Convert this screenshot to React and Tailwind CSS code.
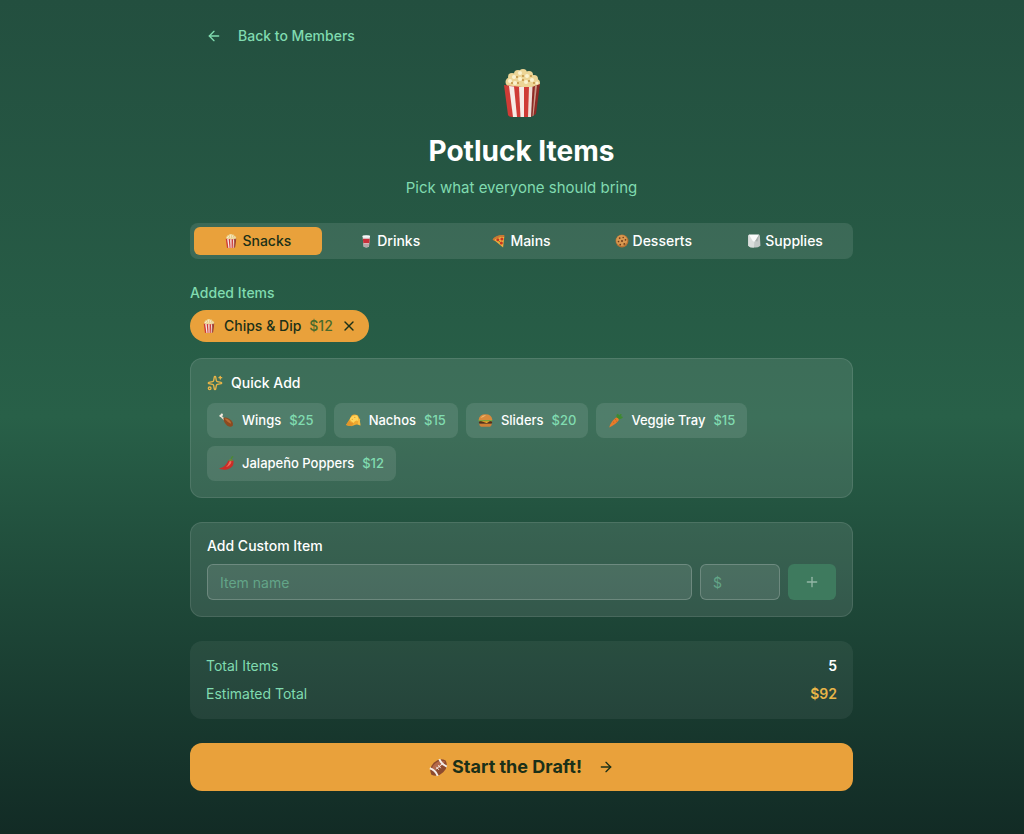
import React, { useState } from 'react'
import { ArrowLeft, ArrowRight, Plus, Sparkles, X } from 'lucide-react'

const Popcorn = ({ className }) => (
  <svg viewBox="0 0 48 48" className={className} aria-hidden="true">
    <g fill="#ecd596">
      <circle cx="12" cy="13" r="4.500" />
      <circle cx="14" cy="8" r="4" />
      <circle cx="20" cy="5" r="4" />
      <circle cx="25" cy="4" r="4" />
      <circle cx="31" cy="6" r="4" />
      <circle cx="36" cy="10" r="4" />
      <circle cx="38" cy="14" r="4" />
      <path d="M9 12 L24 4 L40 12 L38 20 H10 Z" />
    </g>
    <g fill="#fbf2cf">
      <circle cx="12" cy="12" r="2" />
      <circle cx="16" cy="8" r="2" />
      <circle cx="22" cy="4" r="2" />
      <circle cx="22" cy="10" r="2" />
      <circle cx="29" cy="7" r="2" />
      <circle cx="28" cy="13" r="2" />
      <circle cx="34" cy="11" r="2" />
      <circle cx="17" cy="14" r="2" />
      <circle cx="39" cy="14" r="1.500" />
    </g>
    <g fill="#bd8a3a">
      <circle cx="19" cy="8" r="0.900" />
      <circle cx="14" cy="14" r="0.900" />
      <circle cx="20" cy="14" r="0.900" />
      <circle cx="25" cy="7" r="0.900" />
      <circle cx="31" cy="12" r="0.900" />
      <circle cx="33" cy="7" r="0.900" />
      <circle cx="25" cy="11" r="0.900" />
      <circle cx="36" cy="14" r="0.900" />
    </g>
    <path d="M6 16 L24 18 L34 18 L33 48 H14 Q11 48 10 46 Z" fill="#cf3b36" />
    <path d="M34 18 L42 15 L38 45 L33 48 Z" fill="#8f2a25" />
    <path d="M11 17 L16 17.5 L19 48 H15 Z" fill="#f6ebe6" />
    <path d="M21 18 L26 18 L26 48 H22.5 Z" fill="#f6ebe6" />
    <path d="M31 18 L34.5 18 L33 48 H30 Z" fill="#f1ddd6" />
    <path d="M37 17 L39 16.2 L35.5 46.7 L34.5 47.3 Z" fill="#c99c8a" />
  </svg>
)

const Cup = ({ className }) => (
  <svg viewBox="0 0 24 24" className={className} aria-hidden="true">
    <path d="M6 3 H19 L17 22 Q12.500 24 8 22 Z" fill="#dfe3e4" />
    <path d="M6.500 8 H18.500 L17.600 16 H7.400 Z" fill="#c9303a" />
    <path d="M7.500 17 H17.500 L17 22 Q12.500 23.500 8 22 Z" fill="#b9a5a6" />
    <ellipse cx="12.500" cy="4" rx="6.500" ry="2" fill="#f7f8f8" />
  </svg>
)

const Pizza = ({ className }) => (
  <svg viewBox="0 0 24 24" className={className} aria-hidden="true">
    <path d="M1 9 Q9 1 21 2 L21 6 L4 12 Z" fill="#b96c2b" />
    <path d="M3 10 Q11 4 21 5 L19 23 Z" fill="#efae3d" />
    <path d="M1 9 Q9 1 21 2 L21 5 Q11 4 3 11 Z" fill="#c97a35" />
    <circle cx="10" cy="10" r="2.600" fill="#c53522" />
    <circle cx="17" cy="8.500" r="2.600" fill="#c53522" />
    <circle cx="16" cy="15.500" r="2.600" fill="#c53522" />
    <circle cx="12.500" cy="13" r="1" fill="#4f7d33" />
  </svg>
)

const Cookie = ({ className }) => (
  <svg viewBox="0 0 24 24" className={className} aria-hidden="true">
    <circle cx="12" cy="12" r="11" fill="#b87333" />
    <circle cx="11.500" cy="11" r="9.500" fill="#d7974f" />
    <g fill="#6b3a1a">
      <circle cx="8" cy="7" r="1.500" />
      <circle cx="14" cy="6" r="1.300" />
      <circle cx="18" cy="10" r="1.500" />
      <circle cx="12" cy="12" r="1.700" />
      <circle cx="6" cy="13" r="1.400" />
      <circle cx="9" cy="18" r="1.500" />
      <circle cx="16" cy="17" r="1.600" />
    </g>
  </svg>
)

const Tissue = ({ className }) => (
  <svg viewBox="0 0 24 24" className={className} aria-hidden="true">
    <path d="M2 2 H22 L23 20 Q18 24 12 23 Q6 24 2 20 Z" fill="#c3c8c7" />
    <path d="M2 2 H13 L12 23 Q6 24 2 20 Z" fill="#dadddc" />
    <path d="M3 1 H21 L14 12 Q12 14 10 12 Z" fill="#fafbfb" />
    <path d="M21 1 L14 12 L18 13 Z" fill="#a9b0ae" />
  </svg>
)

const Drumstick = ({ className }) => (
  <svg viewBox="0 0 24 24" className={className} aria-hidden="true">
    <path d="M3 5 L9 11" stroke="#e7dccb" strokeWidth="2.500" strokeLinecap="round" />
    <circle cx="2.500" cy="4.500" r="1.900" fill="#f3ebde" />
    <circle cx="4.500" cy="2.700" r="1.900" fill="#f3ebde" />
    <path d="M7 8 Q10 6 16 9 Q24 14 22 20 Q19 24 13 20 Q7 15 7 8 Z" fill="#8c4a20" />
    <path d="M9 9 Q13 8 17 12 Q20 15 19 17 Q14 15 9 9 Z" fill="#b96d34" />
  </svg>
)

const Nachos = ({ className }) => (
  <svg viewBox="0 0 24 24" className={className} aria-hidden="true">
    <path d="M0 19 L5 11 L9 4 Q13 1 19 4 L22 10 L23 20 Q17 17 14 19 Q8 22 0 19 Z" fill="#f0a92f" />
    <path d="M6 10 Q9 4 14 4 Q18 3 19 6 L20 13 Q15 10 12 16 Q8 14 6 10 Z" fill="#ffd45a" />
    <path d="M0 19 L5 12 Q7 16 12 16 L9 21 Z" fill="#e2952a" />
    <path d="M20 8 L22 10 L23 20 L19 18 Z" fill="#f7bf45" />
    <circle cx="14" cy="7" r="1" fill="#e69a2c" />
    <circle cx="10" cy="10" r="1" fill="#e69a2c" />
  </svg>
)

const Burger = ({ className }) => (
  <svg viewBox="0 0 24 24" className={className} aria-hidden="true">
    <path d="M1 11 Q2 2 12 2 Q22 2 23 11 Z" fill="#d88a3c" />
    <path d="M4 8 Q7 3 13 3 Q9 7 4 8 Z" fill="#f0b56c" />
    <path d="M1 11 H23 L22 14 L18 12.500 L14 14.500 L10 12.500 L6 14.500 L1 13 Z" fill="#7ea53a" />
    <rect x="1.500" y="13" width="21" height="4" rx="2" fill="#5b2d17" />
    <path d="M5 13 H19 L14 16 Z" fill="#f4b92f" />
    <path d="M2 17 H22 Q22 22 17 22 H7 Q2 22 2 17 Z" fill="#cf8036" />
  </svg>
)

const Carrot = ({ className }) => (
  <svg viewBox="0 0 24 24" className={className} aria-hidden="true">
    <path d="M14 8 Q12 2 16 1 L18 4 Q21 0 22 3 L20 5 Q25 5 23 8 Q19 11 16 9 Z" fill="#3f8a2f" />
    <path d="M13 7 Q17 7 17.500 11 Q13 18 2 23 Q4 14 13 7 Z" fill="#ea7c2a" />
    <path d="M11 10 L13 11 M8 14 L10 15.500 M13 13 L14.500 13.500" stroke="#b9561a" strokeWidth="1" />
  </svg>
)

const Pepper = ({ className }) => (
  <svg viewBox="0 0 24 24" className={className} aria-hidden="true">
    <path d="M20 6 Q19 3 22 1" fill="none" stroke="#4d8a34" strokeWidth="2" strokeLinecap="round" />
    <path d="M15 7 Q19 4 23 7 Q25 18 14 21 Q6 23 0 20 Q11 17 15 7 Z" fill="#c92d27" />
    <path d="M16.500 9 Q18 7 20 9 Q19 15 11 18 Q15 14 16.500 9 Z" fill="#ee6a5c" />
    <path d="M15 7 Q18 3 23 7 Q19 8 15 7 Z" fill="#5b9a3c" />
  </svg>
)

const Football = ({ className }) => (
  <svg viewBox="0 0 24 24" className={className} aria-hidden="true">
    <path d="M3 21 Q-1 13 6 6 Q13 -1 21 3 Q25 11 18 18 Q11 25 3 21 Z" fill="#8d4a2e" />
    <path d="M4 16 Q3 10 9 6 Q14 2 20 4 Q18 12 4 16 Z" fill="#b5694a" />
    <path d="M1 13 Q8 15 11 22.500 M13 1.500 Q16 8 22.500 11" fill="none" stroke="#f4ede8" strokeWidth="2.500" />
    <path d="M9 14 L16 8 M9.500 11.500 L12 14.500 M12 9.500 L14.500 12.500" stroke="#f4ede8" strokeWidth="1.200" strokeLinecap="round" />
  </svg>
)

const categories = [
  { name: 'Snacks', Icon: Popcorn },
  { name: 'Drinks', Icon: Cup },
  { name: 'Mains', Icon: Pizza },
  { name: 'Desserts', Icon: Cookie },
  { name: 'Supplies', Icon: Tissue },
]

const quickItems = [
  { name: 'Wings', price: 25, Icon: Drumstick },
  { name: 'Nachos', price: 15, Icon: Nachos },
  { name: 'Sliders', price: 20, Icon: Burger },
  { name: 'Veggie Tray', price: 15, Icon: Carrot },
  { name: 'Jalapeño Poppers', price: 12, Icon: Pepper },
]

const PotluckItems = () => {
  const [active, setActive] = useState('Snacks')

  return (
    <div className="min-h-screen bg-linear-to-b from-[#234f3f] via-[#286048] to-[#122b25] pl-[19px] font-[Inter,sans-serif] text-sm font-medium text-white">
      <div className="mx-auto max-w-[663px] pt-[18px] pb-10">
        <button type="button" className="flex h-9 items-center gap-4 px-4 text-[#80dbb0] hover:text-white">
          <ArrowLeft size={16} />
          Back to Members
        </button>

        <header className="mt-[7px] text-center">
          <div className="flex h-16 items-center justify-center">
            <Popcorn className="size-12" />
          </div>
          <h1 className="mt-2 text-[28px] leading-9 font-bold">Potluck Items</h1>
          <p className="mt-2 text-[15px] leading-[22px] font-normal text-[#80dbb0]">Pick what everyone should bring</p>
        </header>

        <div className="mt-6 grid grid-cols-5 gap-1 rounded-lg bg-white/10 p-1">
          {categories.map(({ name, Icon }) => (
            <button
              key={name}
              type="button"
              onClick={() => setActive(name)}
              className={`flex h-7 items-center justify-center gap-1 rounded-md ${active === name ? 'bg-[#e9a13b] text-[#1b3018]' : 'text-white'}`}
            >
              <Icon className="size-3.5" />
              {name}
            </button>
          ))}
        </div>

        <section className="mt-6">
          <h2 className="leading-5 text-[#80dbb0]">Added Items</h2>
          <div className="mt-[7px] flex h-8 w-fit items-center gap-2 rounded-full bg-[#e9a13b] px-3 text-[#1b3018]">
            <Popcorn className="size-3.5" />
            <span>Chips &amp; Dip</span>
            <span className="text-[#4b6a2c]">$12</span>
            <button type="button" aria-label="Remove Chips & Dip">
              <X size={16} />
            </button>
          </div>
        </section>

        <section className="mt-4 rounded-xl border border-white/10 bg-white/10 p-4">
          <h2 className="flex items-center gap-2 leading-4">
            <Sparkles size={16} className="text-[#e9b548]" />
            Quick Add
          </h2>
          <div className="mt-3 flex flex-wrap gap-2">
            {quickItems.map(({ name, price, Icon }) => (
              <button key={name} type="button" className="flex h-[35px] items-center gap-2 rounded-lg bg-white/10 px-3 text-[13px] hover:bg-white/20">
                <Icon className="size-[15px]" />
                <span>{name}</span>
                <span className="text-[#80dbb0]">${price}</span>
              </button>
            ))}
          </div>
        </section>

        <section className="mt-6 rounded-xl border border-white/10 bg-white/10 p-4">
          <h2 className="leading-[14px]">Add Custom Item</h2>
          <form className="mt-[11px] flex gap-2" onSubmit={(e) => e.preventDefault()}>
            <input
              type="text"
              aria-label="Item name"
              placeholder="Item name"
              className="h-9 min-w-0 flex-1 rounded-md border border-white/20 bg-white/10 px-3 font-normal placeholder:text-[#63a588]"
            />
            <input
              type="text"
              aria-label="Price"
              placeholder="$"
              className="h-9 w-20 rounded-md border border-white/20 bg-white/10 px-3 font-normal placeholder:text-[#63a588]"
            />
            <button type="submit" aria-label="Add item" className="flex h-9 w-12 items-center justify-center rounded-md bg-[#3e7a5e] text-[#94b7a6]">
              <Plus size={16} />
            </button>
          </form>
        </section>

        <dl className="mt-6 flex flex-col gap-2 rounded-xl bg-white/6 px-4 py-[15px] leading-5">
          <div className="flex justify-between">
            <dt className="font-normal text-[#80dbb0]">Total Items</dt>
            <dd className="font-semibold">5</dd>
          </div>
          <div className="flex justify-between">
            <dt className="font-normal text-[#80dbb0]">Estimated Total</dt>
            <dd className="font-semibold text-[#e9b548]">$92</dd>
          </div>
        </dl>

        <button type="button" className="mt-6 flex h-12 w-full items-center justify-center rounded-xl bg-[#e9a13b] text-lg font-bold text-[#1b3018] hover:bg-[#f0ad4e]">
          <Football className="mr-1 size-[19px]" />
          Start the Draft!
          <ArrowRight size={16} className="ml-4" />
        </button>
      </div>
    </div>
  )
}

export default PotluckItems
